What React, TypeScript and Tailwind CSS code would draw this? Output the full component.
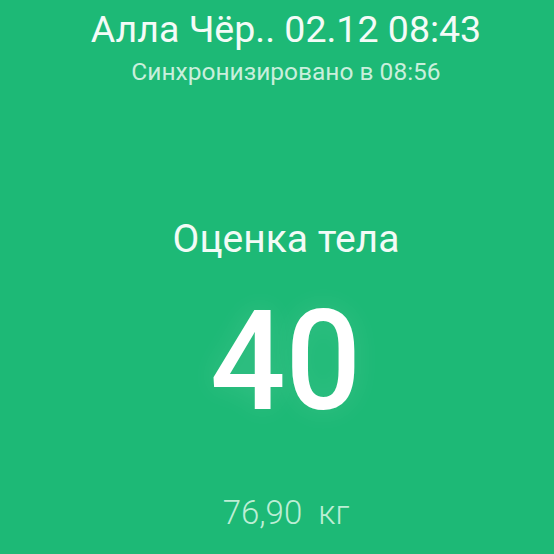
export default function App() {
  return (
    <div
      className="w-[554px] h-[554px] bg-[#1db976] flex flex-col items-center pl-[18px] text-white overflow-hidden"
      style={{ fontFamily: "Roboto, 'Noto Sans', sans-serif" }}
    >
      <div className="mt-[8px] text-[37.5px] leading-[42px] text-[#f4fbf7]">Алла Чёр.. 02.12 08:43</div>
      <div className="mt-[8px] text-[24.5px] leading-[28px] text-[#c9efdc]">Синхронизировано в 08:56</div>
      <div className="mt-[131px] text-[39px] leading-[44px] text-[#f2fbf6]">Оценка тела</div>
      <div className="mt-[40px] text-[140px] leading-[120px] font-medium scale-x-[0.95] text-white [text-shadow:0_0_30px_rgba(255,255,255,0.12)]">40</div>
      <div className="mt-[73px] text-[33px] leading-[38px] font-light text-[#bdeed5]">76,90&nbsp;&nbsp;кг</div>
    </div>
  );
}
